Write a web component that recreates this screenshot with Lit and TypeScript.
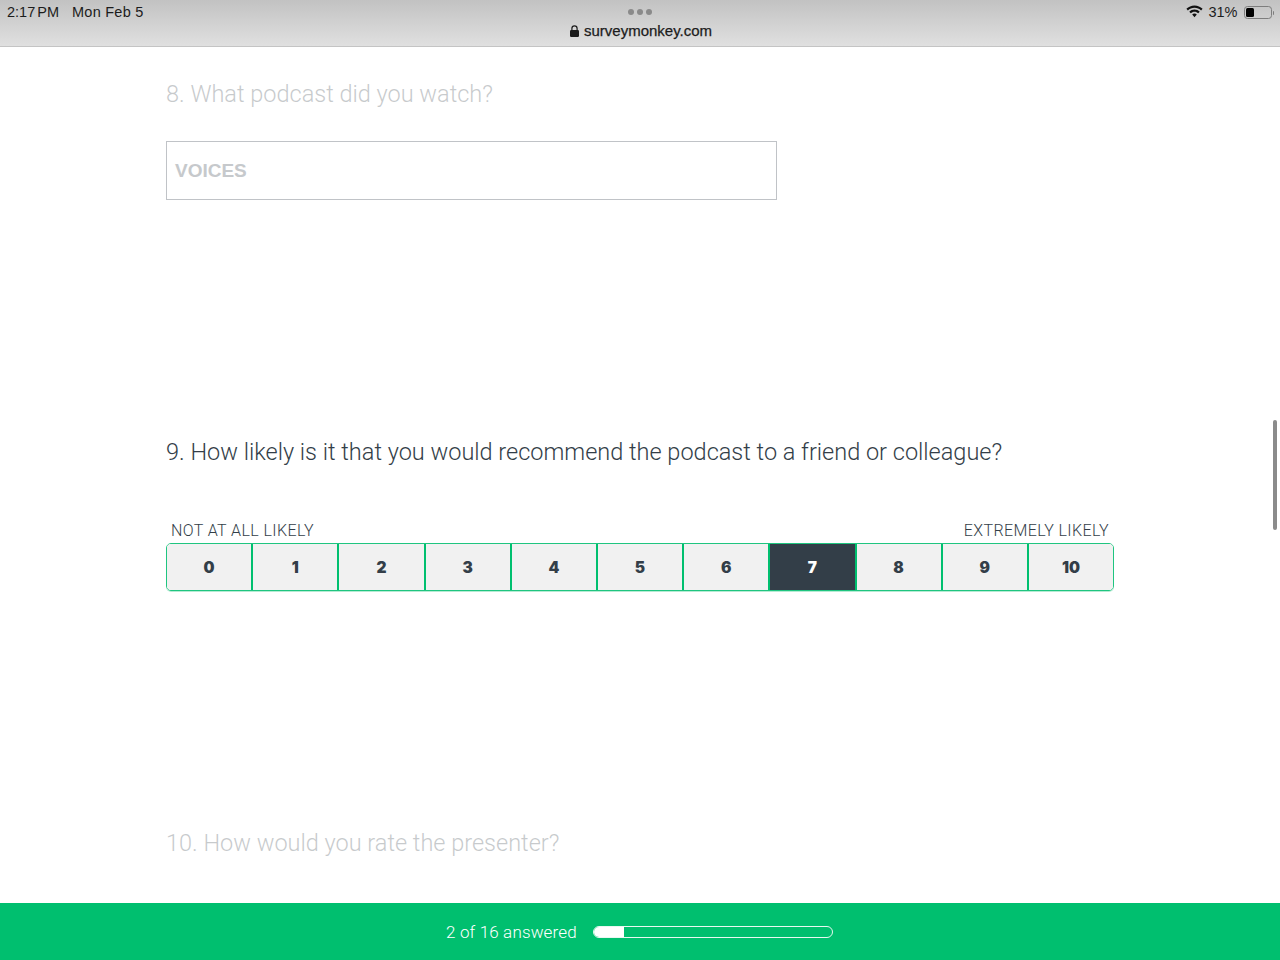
import { LitElement, html, css } from "lit";
import { customElement } from "lit/decorators.js";

const SCALE = [0, 1, 2, 3, 4, 5, 6, 7, 8, 9, 10];

@customElement("app-root")
export class AppRoot extends LitElement {
  static styles = css`
    :host {
      display: flex;
      flex-direction: column;
      position: relative;
      width: 1280px;
      height: 960px;
      overflow: hidden;
      background: #fff;
      font-family: "Roboto", "Liberation Sans", sans-serif;
      color: #333e48;
    }
    .status {
      flex: none;
      box-sizing: border-box;
      height: 47px;
      display: grid;
      grid-template-columns: 1fr auto 1fr;
      background: linear-gradient(#c2c2c2, #e0e0e0);
      border-bottom: 1px solid #c4c4c4;
      color: #1c1c1c;
      font-family: "Liberation Sans", sans-serif;
      font-size: 14.5px;
    }
    .left {
      display: flex;
      gap: 13px;
      padding: 4px 0 0 7px;
      line-height: 16px;
    }
    .time {
      word-spacing: -2px;
    }
    .date {
      letter-spacing: 0.25px;
    }
    .center {
      display: flex;
      flex-direction: column;
      align-items: center;
    }
    .dots {
      display: flex;
      gap: 3px;
      padding-top: 9px;
    }
    .dots i {
      width: 6px;
      height: 6px;
      border-radius: 50%;
      background: #8a8a8a;
    }
    .url {
      display: flex;
      align-items: center;
      gap: 5px;
      margin: 7px 0 0 2px;
      font-size: 15px;
      line-height: 18px;
      -webkit-text-stroke: 0.25px #1c1c1c;
    }
    .right {
      display: flex;
      justify-content: flex-end;
      align-items: flex-start;
      gap: 5px;
      padding: 4px 6px 0 0;
      line-height: 16px;
    }
    .battery {
      display: flex;
      align-items: center;
      margin: 2px 0 0 1px;
    }
    .cell {
      box-sizing: border-box;
      width: 28px;
      height: 13px;
      border: 1px solid #7d7d7d;
      border-radius: 3.5px;
      padding: 1px;
    }
    .cell b {
      display: block;
      width: 8px;
      height: 100%;
      background: #000;
      border-radius: 1.5px;
    }
    .nub {
      width: 1.5px;
      height: 4px;
      margin-left: 1px;
      background: #7d7d7d;
      border-radius: 0 1px 1px 0;
    }
    main {
      flex: 1;
      box-sizing: border-box;
      width: 948px;
      margin-left: 166px;
      display: flex;
      flex-direction: column;
    }
    .q {
      margin: 0;
      font-size: 23.5px;
      font-weight: 300;
      line-height: 32px;
      white-space: nowrap;
    }
    .faded {
      opacity: 0.27;
    }
    .q8 {
      margin-top: 31px;
    }
    .field {
      box-sizing: border-box;
      width: 611px;
      height: 59px;
      margin-top: 31px;
      display: flex;
      align-items: center;
      padding: 1px 0 0 8px;
      border: 1px solid #c0c3c7;
      font-family: "Liberation Sans", sans-serif;
      font-size: 19px;
      font-weight: 700;
      color: #c6c9cc;
    }
    .q9 {
      margin-top: 236px;
    }
    .labels {
      display: flex;
      justify-content: space-between;
      margin-top: 53px;
      padding: 0 5px;
      font-size: 16px;
      font-weight: 300;
      line-height: 20px;
      letter-spacing: 0.4px;
      color: #333e48;
    }
    .scale {
      display: flex;
      box-sizing: border-box;
      height: 48px;
      margin-top: 2px;
      overflow: hidden;
      border: 1px solid #1fc580;
      border-radius: 5px;
      box-shadow: 0 1px 0 #b5ebd3;
    }
    .opt {
      flex: 1;
      display: flex;
      align-items: center;
      justify-content: center;
      background: #f1f1f1;
      border-left: 2px solid #00bf6f;
      font-family: "Inter", sans-serif;
      font-size: 15.5px;
      font-weight: 900;
      color: #333e48;
    }
    .opt:first-child {
      border-left: 0;
    }
    .opt.on {
      background: #333e48;
      color: #fff;
      border-right: 2px solid #00bf6f;
      margin-right: -2px;
      position: relative;
    }
    .q10 {
      margin-top: 236px;
    }
    footer {
      flex: none;
      height: 57px;
      display: flex;
      align-items: center;
      gap: 16px;
      padding-left: 446px;
      background: #00bf6f;
      color: #fff;
      font-size: 17px;
      font-weight: 300;
      letter-spacing: 0.15px;
    }
    .track {
      box-sizing: border-box;
      width: 240px;
      height: 12px;
      border: 1px solid #e8f8f1;
      border-radius: 6px;
      overflow: hidden;
    }
    .fill {
      height: 100%;
      background: #fff;
    }
    .scrollbar {
      position: absolute;
      top: 420px;
      right: 3px;
      width: 4px;
      height: 110px;
      border-radius: 2px;
      background: #8b8b8b;
    }
  `;

  render() {
    const answered = 2;
    const total = 16;
    return html`
      <header class="status">
        <div class="left"><span class="time">2:17 PM</span><span class="date">Mon Feb 5</span></div>
        <div class="center">
          <div class="dots"><i></i><i></i><i></i></div>
          <div class="url">
            <svg width="9" height="12" viewBox="0 0 9 12">
              <path d="M1.9 5V3.4a2.6 2.6 0 0 1 5.2 0V5" fill="none" stroke="#1c1c1c" stroke-width="1.2" />
              <rect x="0" y="5" width="9" height="7" rx="1.2" fill="#1c1c1c" />
            </svg>
            <span>surveymonkey.com</span>
          </div>
        </div>
        <div class="right">
          <svg width="17" height="13" viewBox="0 0 17 13" style="margin-top:1px">
            <path d="M8.5 0.5C5.3 0.5 2.5 1.8 0.4 3.8L1.9 5.4C3.6 3.8 5.9 2.8 8.5 2.8S13.4 3.8 15.1 5.4L16.6 3.8C14.5 1.8 11.7 0.5 8.5 0.5Z M8.5 4.6C6.5 4.6 4.7 5.4 3.3 6.7L4.8 8.3C5.8 7.4 7.1 6.8 8.5 6.8S11.2 7.4 12.2 8.3L13.7 6.7C12.3 5.4 10.5 4.6 8.5 4.6Z M8.5 8.6C7.6 8.6 6.8 9 6.2 9.6L8.5 12.2L10.8 9.6C10.2 9 9.4 8.6 8.5 8.6Z" fill="#111" />
          </svg>
          <span>31%</span>
          <div class="battery"><div class="cell"><b></b></div><div class="nub"></div></div>
        </div>
      </header>
      <main>
        <h2 class="q q8 faded">8. What podcast did you watch?</h2>
        <div class="field">VOICES</div>
        <h2 class="q q9">9. How likely is it that you would recommend the podcast to a friend or colleague?</h2>
        <div class="labels"><span>NOT AT ALL LIKELY</span><span>EXTREMELY LIKELY</span></div>
        <div class="scale">
          ${SCALE.map((n) => html`<div class="opt ${n === 7 ? "on" : ""}">${n}</div>`)}
        </div>
        <h2 class="q q10 faded">10. How would you rate the presenter?</h2>
      </main>
      <footer>
        <span>${answered} of ${total} answered</span>
        <div class="track"><div class="fill" style="width:${(answered / total) * 100}%"></div></div>
      </footer>
      <div class="scrollbar"></div>
    `;
  }
}
